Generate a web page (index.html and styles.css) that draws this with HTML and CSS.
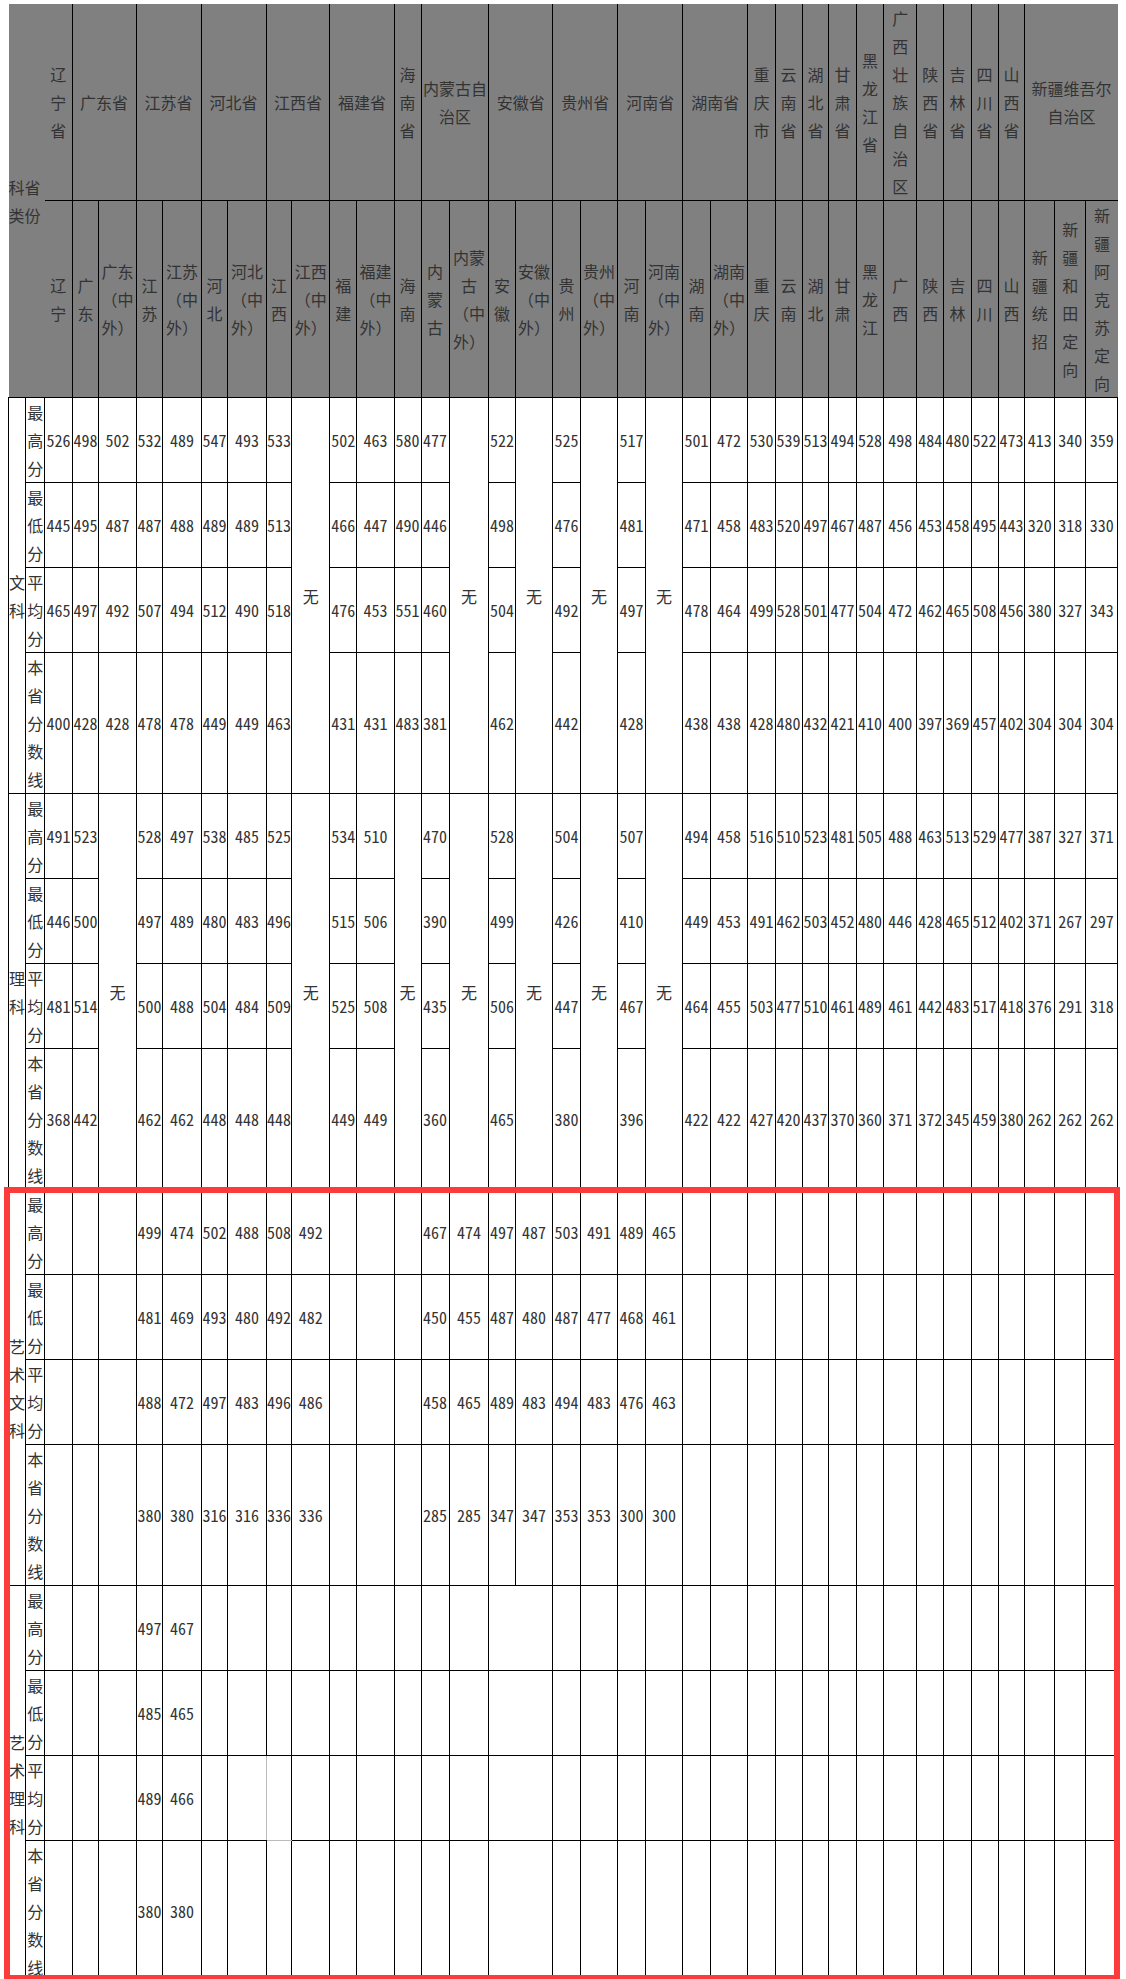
FILE: index.html
```html
<!DOCTYPE html>
<html lang="zh-CN">
<head>
<meta charset="utf-8">
<title>录取分数</title>
<link rel="stylesheet" href="styles.css">
</head>
<body>
<table class="sheet">
<colgroup>
<col class="c1"><col class="c2"><col class="c3"><col class="c4"><col class="c5"><col class="c6"><col class="c7"><col class="c8"><col class="c9"><col class="c10"><col class="c11"><col class="c12"><col class="c13"><col class="c14"><col class="c15"><col class="c16"><col class="c17"><col class="c18"><col class="c19"><col class="c20"><col class="c21"><col class="c22"><col class="c23"><col class="c24"><col class="c25"><col class="c26"><col class="c27"><col class="c28"><col class="c29"><col class="c30"><col class="c31"><col class="c32"><col class="c33"><col class="c34"><col class="c35"><col class="c36"><col class="c37">
</colgroup>
<thead>
<tr class="top">
<th class="corner" rowspan="2" colspan="2">科省类份</th>
<th>辽宁省</th>
<th colspan="2">广东省</th>
<th colspan="2">江苏省</th>
<th colspan="2">河北省</th>
<th colspan="2">江西省</th>
<th colspan="2">福建省</th>
<th>海南省</th>
<th colspan="2">内蒙古自治区</th>
<th colspan="2">安徽省</th>
<th colspan="2">贵州省</th>
<th colspan="2">河南省</th>
<th colspan="2">湖南省</th>
<th>重庆市</th>
<th>云南省</th>
<th>湖北省</th>
<th>甘肃省</th>
<th>黑龙江省</th>
<th>广西壮族自治区</th>
<th>陕西省</th>
<th>吉林省</th>
<th>四川省</th>
<th>山西省</th>
<th class="edge" colspan="3">新疆维吾尔自治区</th>
</tr>
<tr>
<th>辽宁</th>
<th>广东</th>
<th>广东（中外）</th>
<th>江苏</th>
<th>江苏（中外）</th>
<th>河北</th>
<th>河北（中外）</th>
<th>江西</th>
<th>江西（中外）</th>
<th>福建</th>
<th>福建（中外）</th>
<th>海南</th>
<th>内蒙古</th>
<th>内蒙古（中外）</th>
<th>安徽</th>
<th>安徽（中外）</th>
<th>贵州</th>
<th>贵州（中外）</th>
<th>河南</th>
<th>河南（中外）</th>
<th>湖南</th>
<th>湖南（中外）</th>
<th>重庆</th>
<th>云南</th>
<th>湖北</th>
<th>甘肃</th>
<th>黑龙江</th>
<th>广西</th>
<th>陕西</th>
<th>吉林</th>
<th>四川</th>
<th>山西</th>
<th>新疆统招</th>
<th>新疆和田定向</th>
<th class="edge">新疆阿克苏定向</th>
</tr>
</thead>
<tbody>
<!-- 文科 -->
<tr>
<td class="cat" rowspan="4">文科</td><td class="lab">最高分</td>
<td>526</td><td>498</td><td>502</td><td>532</td><td>489</td><td>547</td><td>493</td><td>533</td>
<td rowspan="4">无</td>
<td>502</td><td>463</td><td>580</td><td>477</td>
<td rowspan="4">无</td>
<td>522</td>
<td rowspan="4">无</td>
<td>525</td>
<td rowspan="4">无</td>
<td>517</td>
<td rowspan="4">无</td>
<td>501</td><td>472</td><td>530</td><td>539</td><td>513</td><td>494</td><td>528</td><td>498</td><td>484</td><td>480</td><td>522</td><td>473</td><td>413</td><td>340</td><td>359</td>
</tr>
<tr>
<td class="lab">最低分</td>
<td>445</td><td>495</td><td>487</td><td>487</td><td>488</td><td>489</td><td>489</td><td>513</td>
<td>466</td><td>447</td><td>490</td><td>446</td>
<td>498</td>
<td>476</td>
<td>481</td>
<td>471</td><td>458</td><td>483</td><td>520</td><td>497</td><td>467</td><td>487</td><td>456</td><td>453</td><td>458</td><td>495</td><td>443</td><td>320</td><td>318</td><td>330</td>
</tr>
<tr>
<td class="lab">平均分</td>
<td>465</td><td>497</td><td>492</td><td>507</td><td>494</td><td>512</td><td>490</td><td>518</td>
<td>476</td><td>453</td><td>551</td><td>460</td>
<td>504</td>
<td>492</td>
<td>497</td>
<td>478</td><td>464</td><td>499</td><td>528</td><td>501</td><td>477</td><td>504</td><td>472</td><td>462</td><td>465</td><td>508</td><td>456</td><td>380</td><td>327</td><td>343</td>
</tr>
<tr>
<td class="lab">本省分数线</td>
<td>400</td><td>428</td><td>428</td><td>478</td><td>478</td><td>449</td><td>449</td><td>463</td>
<td>431</td><td>431</td><td>483</td><td>381</td>
<td>462</td>
<td>442</td>
<td>428</td>
<td>438</td><td>438</td><td>428</td><td>480</td><td>432</td><td>421</td><td>410</td><td>400</td><td>397</td><td>369</td><td>457</td><td>402</td><td>304</td><td>304</td><td>304</td>
</tr>
<!-- 理科 -->
<tr>
<td class="cat" rowspan="4">理科</td><td class="lab">最高分</td>
<td>491</td><td>523</td>
<td rowspan="4">无</td>
<td>528</td><td>497</td><td>538</td><td>485</td><td>525</td>
<td rowspan="4">无</td>
<td>534</td><td>510</td>
<td rowspan="4">无</td>
<td>470</td>
<td rowspan="4">无</td>
<td>528</td>
<td rowspan="4">无</td>
<td>504</td>
<td rowspan="4">无</td>
<td>507</td>
<td rowspan="4">无</td>
<td>494</td><td>458</td><td>516</td><td>510</td><td>523</td><td>481</td><td>505</td><td>488</td><td>463</td><td>513</td><td>529</td><td>477</td><td>387</td><td>327</td><td>371</td>
</tr>
<tr>
<td class="lab">最低分</td>
<td>446</td><td>500</td>
<td>497</td><td>489</td><td>480</td><td>483</td><td>496</td>
<td>515</td><td>506</td>
<td>390</td>
<td>499</td>
<td>426</td>
<td>410</td>
<td>449</td><td>453</td><td>491</td><td>462</td><td>503</td><td>452</td><td>480</td><td>446</td><td>428</td><td>465</td><td>512</td><td>402</td><td>371</td><td>267</td><td>297</td>
</tr>
<tr>
<td class="lab">平均分</td>
<td>481</td><td>514</td>
<td>500</td><td>488</td><td>504</td><td>484</td><td>509</td>
<td>525</td><td>508</td>
<td>435</td>
<td>506</td>
<td>447</td>
<td>467</td>
<td>464</td><td>455</td><td>503</td><td>477</td><td>510</td><td>461</td><td>489</td><td>461</td><td>442</td><td>483</td><td>517</td><td>418</td><td>376</td><td>291</td><td>318</td>
</tr>
<tr>
<td class="lab">本省分数线</td>
<td>368</td><td>442</td>
<td>462</td><td>462</td><td>448</td><td>448</td><td>448</td>
<td>449</td><td>449</td>
<td>360</td>
<td>465</td>
<td>380</td>
<td>396</td>
<td>422</td><td>422</td><td>427</td><td>420</td><td>437</td><td>370</td><td>360</td><td>371</td><td>372</td><td>345</td><td>459</td><td>380</td><td>262</td><td>262</td><td>262</td>
</tr>
<!-- 艺术文科 -->
<tr>
<td class="cat" rowspan="4">艺术文科</td><td class="lab">最高分</td>
<td></td><td></td><td></td>
<td>499</td><td>474</td><td>502</td><td>488</td><td>508</td><td>492</td>
<td></td><td></td><td></td>
<td>467</td><td>474</td><td>497</td><td>487</td><td>503</td><td>491</td><td>489</td><td>465</td>
<td></td><td></td><td></td><td></td><td></td><td></td><td></td><td></td><td></td><td></td><td></td><td></td><td></td><td></td><td></td>
</tr>
<tr>
<td class="lab">最低分</td>
<td></td><td></td><td></td>
<td>481</td><td>469</td><td>493</td><td>480</td><td>492</td><td>482</td>
<td></td><td></td><td></td>
<td>450</td><td>455</td><td>487</td><td>480</td><td>487</td><td>477</td><td>468</td><td>461</td>
<td></td><td></td><td></td><td></td><td></td><td></td><td></td><td></td><td></td><td></td><td></td><td></td><td></td><td></td><td></td>
</tr>
<tr>
<td class="lab">平均分</td>
<td></td><td></td><td></td>
<td>488</td><td>472</td><td>497</td><td>483</td><td>496</td><td>486</td>
<td></td><td></td><td></td>
<td>458</td><td>465</td><td>489</td><td>483</td><td>494</td><td>483</td><td>476</td><td>463</td>
<td></td><td></td><td></td><td></td><td></td><td></td><td></td><td></td><td></td><td></td><td></td><td></td><td></td><td></td><td></td>
</tr>
<tr>
<td class="lab">本省分数线</td>
<td></td><td></td><td></td>
<td>380</td><td>380</td><td>316</td><td>316</td><td>336</td><td>336</td>
<td></td><td></td><td></td>
<td>285</td><td>285</td><td>347</td><td>347</td><td>353</td><td>353</td><td>300</td><td>300</td>
<td></td><td></td><td></td><td></td><td></td><td></td><td></td><td></td><td></td><td></td><td></td><td></td><td></td><td></td><td></td>
</tr>
<!-- 艺术理科 -->
<tr>
<td class="cat" rowspan="4">艺术理科</td><td class="lab">最高分</td>
<td></td><td></td><td></td>
<td>497</td><td>467</td>
<td></td><td></td><td></td><td></td><td></td><td></td><td></td><td></td><td></td>
<td colspan="2"></td>
<td></td><td></td><td></td><td></td><td></td><td></td><td></td><td></td><td></td><td></td><td></td><td></td><td></td><td></td><td></td><td></td><td></td><td></td><td></td>
</tr>
<tr>
<td class="lab">最低分</td>
<td></td><td></td><td></td>
<td>485</td><td>465</td>
<td></td><td></td><td></td><td></td><td></td><td></td><td></td><td></td><td></td>
<td colspan="2"></td>
<td></td><td></td><td></td><td></td><td></td><td></td><td></td><td></td><td></td><td></td><td></td><td></td><td></td><td></td><td></td><td></td><td></td><td></td><td></td>
</tr>
<tr>
<td class="lab">平均分</td>
<td></td><td></td><td></td>
<td>489</td><td>466</td>
<td></td><td class="soft-r"></td><td class="soft"></td><td></td><td></td><td></td><td></td><td></td><td></td>
<td colspan="2"></td>
<td></td><td></td><td></td><td></td><td></td><td></td><td></td><td></td><td></td><td></td><td></td><td></td><td></td><td></td><td></td><td></td><td></td><td></td><td></td>
</tr>
<tr>
<td class="lab">本省分数线</td>
<td></td><td></td><td></td>
<td>380</td><td>380</td>
<td></td><td></td><td></td><td></td><td></td><td></td><td></td><td></td><td></td>
<td colspan="2"></td>
<td></td><td></td><td></td><td></td><td></td><td></td><td></td><td></td><td></td><td></td><td></td><td></td><td></td><td></td><td></td><td></td><td></td><td></td><td></td>
</tr>
</tbody>
</table>
<div class="mark"></div>
</body>
</html>
```
FILE: styles.css
```css
html, body {
  background: #fff;
}
body {
  margin: 4px 0 0 8px;
  font-family: "Noto Sans Mono CJK SC", "Noto Sans CJK SC", sans-serif;
  font-size: 16px;
  color: #333;
}
.sheet {
  border-collapse: collapse;
  table-layout: fixed;
  width: 1109px;
}
.sheet th,
.sheet td {
  border: 1px solid #000;
  padding: 0;
  line-height: 28px;
  text-align: center;
  vertical-align: middle;
  font-weight: normal;
  white-space: normal;
}
.sheet th {
  background: #808080;
  color: #333;
  padding: 0 1px;
}
.sheet .top th {
  border-top-style: hidden;
}
.sheet .corner {
  border-left-style: hidden;
  border-right-style: hidden;
  text-align: left;
  padding: 0;
}
.sheet .edge {
  border-right-style: hidden;
}
.sheet .soft {
  border-left-color: #bbb;
  border-bottom-color: #bbb;
}
.sheet .soft-r {
  border-right-color: #bbb;
}
.mark {
  position: absolute;
  left: 4px;
  top: 1187px;
  width: 1116px;
  height: 794px;
  border: 6px solid #fc3b3b;
  box-sizing: border-box;
  pointer-events: none;
}
.c1 { width: 17.2px; }
.c2 { width: 19.1px; }
.c3 { width: 27.3px; }
.c4 { width: 26.9px; }
.c5 { width: 37px; }
.c6 { width: 26.9px; }
.c7 { width: 38.1px; }
.c8 { width: 26.9px; }
.c9 { width: 38.1px; }
.c10 { width: 25.8px; }
.c11 { width: 38.1px; }
.c12 { width: 26.9px; }
.c13 { width: 37.3px; }
.c14 { width: 27px; }
.c15 { width: 28px; }
.c16 { width: 39.8px; }
.c17 { width: 26.2px; }
.c18 { width: 37.7px; }
.c19 { width: 27.3px; }
.c20 { width: 37.7px; }
.c21 { width: 27.3px; }
.c22 { width: 37.7px; }
.c23 { width: 27.3px; }
.c24 { width: 37.7px; }
.c25 { width: 27.3px; }
.c26 { width: 26.9px; }
.c27 { width: 26.9px; }
.c28 { width: 27.3px; }
.c29 { width: 27.7px; }
.c30 { width: 33px; }
.c31 { width: 26.9px; }
.c32 { width: 27.3px; }
.c33 { width: 27px; }
.c34 { width: 26.9px; }
.c35 { width: 29.8px; }
.c36 { width: 31.2px; }
.c37 { width: 31.6px; }
```
